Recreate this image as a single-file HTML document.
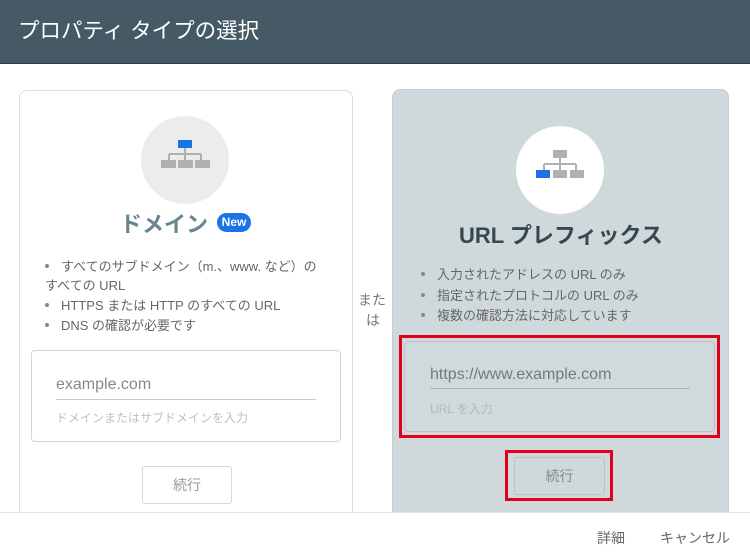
<!DOCTYPE html>
<html><head><meta charset="utf-8"><style>
*{margin:0;padding:0;box-sizing:border-box}
body{width:750px;height:559px;position:relative;overflow:hidden;background:#fff;font-family:"Liberation Sans","Noto Sans CJK JP",sans-serif}
.a{position:absolute;white-space:nowrap}
.hdr{left:0;top:0;width:750px;height:64px;background:#455a64;border-bottom:1px solid #2e3d44}
.t{color:#fff;font-size:21.5px;left:18px;top:14px}
.card{border:1px solid #dcdcdc;border-radius:8px}
.li{font-size:13px;color:#666}
.dot{display:inline-block;width:4px;height:4px;border-radius:50%;background:#888;margin-right:12px;vertical-align:middle;position:relative;top:-2px}
</style></head><body>
<div class="a hdr"></div>
<div class="a t">プロパティ タイプの選択</div>

<div class="a card" style="left:19px;top:90px;width:334px;height:440px;background:#fff"></div>
<div class="a" style="left:141px;top:116px;width:88px;height:88px;border-radius:50%;background:#ececec"></div>
<svg class="a" style="left:158px;top:138px" width="54" height="40" viewBox="0 0 54 40">
<rect x="20" y="2" width="14" height="8" fill="#1a73e8"/>
<path d="M27 10v6M11 16h32M11 16v6M27 16v6M43 16v6" stroke="#b0b0b0" stroke-width="2" fill="none"/>
<rect x="3" y="22" width="15" height="8" fill="#b0b0b0"/><rect x="20" y="22" width="15" height="8" fill="#b0b0b0"/><rect x="37" y="22" width="15" height="8" fill="#b0b0b0"/>
</svg>
<div class="a" style="left:120px;top:207px;font-size:22px;font-weight:bold;color:#698690">ドメイン</div>
<div class="a" style="left:217px;top:213px;width:34px;height:19px;border-radius:10px;background:#1a73e8;color:#fff;font-size:12px;font-weight:bold;text-align:center;line-height:19px">New</div>
<div class="a li" style="left:45px;top:256px"><span class="dot"></span>すべてのサブドメイン（m.、www. など）の</div>
<div class="a li" style="left:45px;top:275px">すべての URL</div>
<div class="a li" style="left:45px;top:295px"><span class="dot"></span>HTTPS または HTTP のすべての URL</div>
<div class="a li" style="left:45px;top:315px"><span class="dot"></span>DNS の確認が必要です</div>
<div class="a" style="left:31px;top:350px;width:310px;height:92px;border:1px solid #d5d5d5;border-radius:4px"></div>
<div class="a" style="left:56px;top:376px;font-size:16px;color:#888">example.com</div>
<div class="a" style="left:56px;top:399px;width:260px;height:1px;background:#c8c8c8"></div>
<div class="a" style="left:56px;top:409px;font-size:12px;color:#c0c0c0">ドメインまたはサブドメインを入力</div>
<div class="a" style="left:142px;top:466px;width:90px;height:38px;border:1px solid #d8d8d8;border-radius:3px;text-align:center;line-height:36px;font-size:14px;color:#999">続行</div>

<div class="a" style="left:358px;top:290px;font-size:14px;color:#777">また</div>
<div class="a" style="left:366px;top:310px;font-size:14px;color:#777">は</div>

<div class="a" style="left:392px;top:89px;width:337px;height:440px;background:#cfd9dc;border-radius:8px;border:1px solid #c5cfd2"></div>
<div class="a" style="left:516px;top:126px;width:88px;height:88px;border-radius:50%;background:#fff"></div>
<svg class="a" style="left:533px;top:148px" width="54" height="40" viewBox="0 0 54 40">
<rect x="20" y="2" width="14" height="8" fill="#b0b0b0"/>
<path d="M27 10v6M11 16h32M11 16v6M27 16v6M43 16v6" stroke="#b0b0b0" stroke-width="2" fill="none"/>
<rect x="3" y="22" width="14" height="8" fill="#1a73e8"/><rect x="20" y="22" width="14" height="8" fill="#b0b0b0"/><rect x="37" y="22" width="14" height="8" fill="#b0b0b0"/>
</svg>
<div class="a" style="left:459px;top:218px;font-size:22px;font-weight:bold;color:#37474f">URL プレフィックス</div>
<div class="a li" style="left:421px;top:264px"><span class="dot"></span>入力されたアドレスの URL のみ</div>
<div class="a li" style="left:421px;top:285px"><span class="dot"></span>指定されたプロトコルの URL のみ</div>
<div class="a li" style="left:421px;top:305px"><span class="dot"></span>複数の確認方法に対応しています</div>
<div class="a" style="left:399px;top:335px;width:321px;height:103px;border:3px solid #e0001a"></div>
<div class="a" style="left:404px;top:341px;width:311px;height:91px;border:1px solid #b8c4c7;border-radius:4px;background:#d0dadd"></div>
<div class="a" style="left:430px;top:366px;font-size:16px;color:#777">https://www.example.com</div>
<div class="a" style="left:430px;top:388px;width:260px;height:1px;background:#aab4b7"></div>
<div class="a" style="left:430px;top:400px;font-size:12px;color:#b0b8bb">URL を入力</div>
<div class="a" style="left:505px;top:450px;width:108px;height:51px;border:3px solid #e0001a"></div>
<div class="a" style="left:514px;top:457px;width:91px;height:38px;border:1px solid #b8c4c7;border-radius:3px;text-align:center;line-height:36px;font-size:14px;color:#888">続行</div>

<div class="a" style="left:0;top:512px;width:750px;height:47px;background:#fff;border-top:1px solid #e2e2e2"></div>
<div class="a" style="left:597px;top:528px;font-size:14px;color:#666">詳細</div>
<div class="a" style="left:660px;top:528px;font-size:14px;color:#666">キャンセル</div>
</body></html>
